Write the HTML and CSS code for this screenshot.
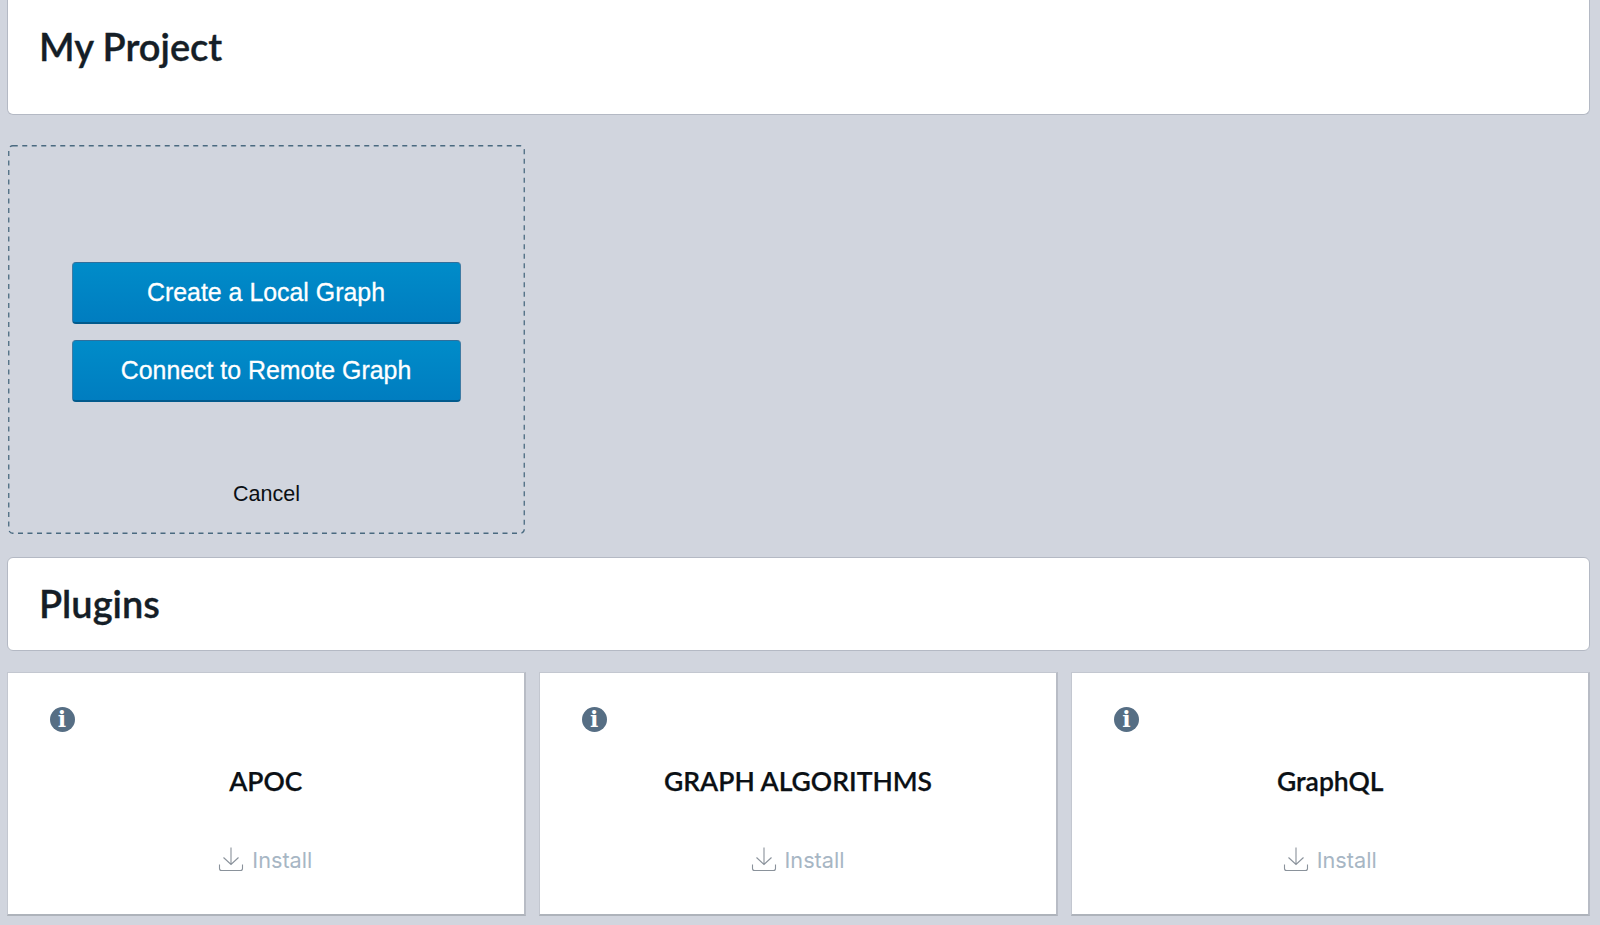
FILE: index.html
```html
<!DOCTYPE html>
<html lang="en">
<head>
    <meta charset="UTF-8">
    <meta name="viewport" content="width=device-width, initial-scale=1.0">
    <title>My Project</title>
    <link rel="stylesheet" href="styles.css">
</head>
<body>
    <div class="panel panel-project">
        <h1>My Project</h1>
    </div>

    <div class="new-graph">
        <svg class="new-graph-border" width="517" height="389"><rect x="0.75" y="0.75" width="515.5" height="387.5" rx="4"/></svg>
        <div class="new-graph-buttons">
            <button type="button" class="primary">Create a Local Graph</button>
            <button type="button" class="primary">Connect to Remote Graph</button>
        </div>
        <a class="cancel">Cancel</a>
    </div>

    <div class="panel panel-plugins">
        <h1>Plugins</h1>
    </div>

    <div class="plugins">
        <div class="plugin">
            <span class="info">i</span>
            <h2>APOC</h2>
            <a class="install">
                <svg class="install-icon" viewBox="0 0 26 26"><path d="M13 1.5V18.5M5.5 11.5L13 18.5L20.5 11.5M1.5 18.5V22.5Q1.5 24.5 3.5 24.5H22.5Q24.5 24.5 24.5 22.5V18.5"/></svg>
                Install
            </a>
        </div>
        <div class="plugin">
            <span class="info">i</span>
            <h2>GRAPH ALGORITHMS</h2>
            <a class="install">
                <svg class="install-icon" viewBox="0 0 26 26"><path d="M13 1.5V18.5M5.5 11.5L13 18.5L20.5 11.5M1.5 18.5V22.5Q1.5 24.5 3.5 24.5H22.5Q24.5 24.5 24.5 22.5V18.5"/></svg>
                Install
            </a>
        </div>
        <div class="plugin">
            <span class="info">i</span>
            <h2>GraphQL</h2>
            <a class="install">
                <svg class="install-icon" viewBox="0 0 26 26"><path d="M13 1.5V18.5M5.5 11.5L13 18.5L20.5 11.5M1.5 18.5V22.5Q1.5 24.5 3.5 24.5H22.5Q24.5 24.5 24.5 22.5V18.5"/></svg>
                Install
            </a>
        </div>
    </div>
</body>
</html>
```

FILE: styles.css
```css
html, body {
    height: 925px;
    overflow: hidden;
}
body {
    margin: 0;
    padding: 0 8px;
    background-color: #d1d5de;
    font-family: "Liberation Sans", Arial, sans-serif;
}
.panel {
    box-sizing: border-box;
    background-color: white;
    border: 1px solid #b4b9c4;
    border-radius: 6px;
    margin-left: -1px;
    margin-right: 2px;
    padding-left: 31px;
}
.panel h1 {
    margin: 0;
    color: #151e27;
    font-family: Lato, sans-serif;
    font-size: 38px;
    font-weight: 600;
    -webkit-text-stroke: 0.35px #151e27;
    line-height: 44px;
}
.panel-project {
    height: 115px;
    border-top: none;
    border-top-left-radius: 0;
    border-top-right-radius: 0;
    padding-top: 24px;
}
.panel-plugins {
    height: 94px;
    padding-top: 23px;
    margin-top: 23px;
}
.new-graph {
    box-sizing: border-box;
    width: 517px;
    height: 389px;
    margin-top: 30px;
    padding-top: 1px;
    display: flex;
    flex-direction: column;
    align-items: center;
    position: relative;
}
.new-graph-border {
    position: absolute;
    left: 0;
    top: 0;
}
.new-graph-border rect {
    fill: none;
    stroke: #4a6a80;
    stroke-width: 1.3;
    stroke-dasharray: 5 4.5;
}
.new-graph-buttons {
    display: flex;
    flex-direction: column;
    gap: 16px;
    margin-top: 116px;
}
.primary {
    box-sizing: border-box;
    width: 389px;
    height: 62px;
    padding: 0 1px 1px 0;
    background: linear-gradient(#008cc9, #007dc0);
    border: 1px solid #3f7ba3;
    border-top-color: #2f6f9c;
    border-bottom: 2px solid #015a8c;
    border-radius: 4px;
    color: white;
    font-family: "Liberation Sans", Arial, sans-serif;
    font-size: 24.9px;
    -webkit-text-stroke: 0.3px white;
    cursor: pointer;
}
.cancel {
    margin-top: 79px;
    color: #0b0f14;
    font-size: 21.5px;
    line-height: 26px;
}
.plugins {
    display: grid;
    grid-template-columns: repeat(3, 1fr);
    gap: 13.5px;
    margin: 21px 2px 0 -1px;
}
.plugin {
    box-sizing: border-box;
    height: 244px;
    background-color: white;
    border: 1px solid #c3c7d0;
    border-bottom: 2px solid #aeb3bb;
    border-right: 2px solid #b8bcc5;
    display: flex;
    flex-direction: column;
    align-items: center;
    position: relative;
}
.plugin h2 {
    margin: 91px 0 0;
    color: #0b1015;
    font-family: Lato, sans-serif;
    font-size: 26.5px;
    font-weight: 600;
    -webkit-text-stroke: 0.25px #0b1015;
    line-height: 34px;
}
.info {
    position: absolute;
    left: 41.5px;
    top: 34px;
    width: 25px;
    height: 25px;
    border-radius: 50%;
    background-color: #566e84;
    color: white;
    font-family: "DejaVu Serif", serif;
    font-size: 22px;
    font-weight: 700;
    line-height: 25px;
    text-align: center;
}
.install {
    display: flex;
    align-items: center;
    gap: 8px;
    margin-top: 46px;
    color: #a7b6c4;
    font-family: Inter, sans-serif;
    font-size: 21.7px;
    line-height: 32px;
}
.install-icon {
    width: 26px;
    height: 26px;
    margin-left: -1px;
    margin-top: -3px;
    fill: none;
    stroke: #8a929b;
    stroke-width: 1.1;
}
```
